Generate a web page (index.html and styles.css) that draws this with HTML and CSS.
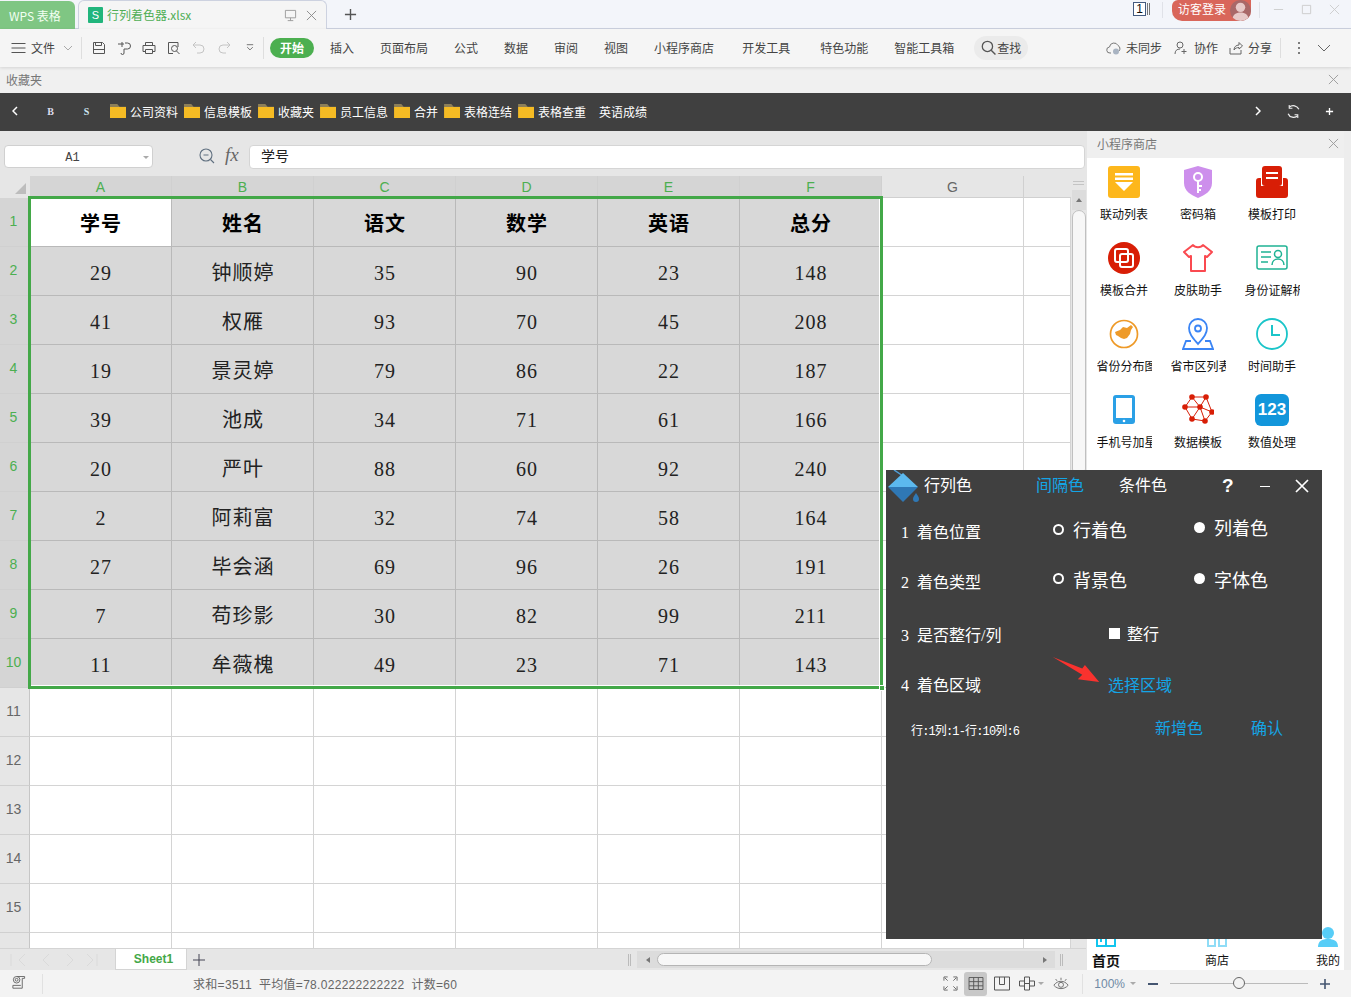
FILE: index.html
```html
<!DOCTYPE html>
<html lang="zh">
<head>
<meta charset="utf-8">
<title>行列着色器.xlsx</title>
<link rel="stylesheet" href="styles.css">
</head>
<body>
<div class="app">
  <header class="titlebar">
    <div class="tab-home">WPS 表格</div>
    <div class="tab-doc">
      <span class="xls-icon">S</span><span class="doc-name">行列着色器.xlsx</span>
      <svg class="ic-pin" viewBox="0 0 14 14"><path d="M1.500 1.500h11v8h-11zM7 9.500v3M4 12.500h6" fill="none" stroke="#999"/></svg>
      <svg class="ic-x" viewBox="0 0 12 12"><path d="M1 1l10 10M11 1L1 11" stroke="#888" fill="none"/></svg>
    </div>
    <svg class="ic-plus" viewBox="0 0 14 14"><path d="M7 1v12M1 7h12" stroke="#555" stroke-width="1.500" fill="none"/></svg>
    <div class="title-right">
      <span class="win-num">1</span><span class="win-num-tail"></span>
      <span class="title-sep"></span>
      <span class="login">访客登录<span class="avatar"><svg viewBox="0 0 20 20"><circle cx="10" cy="7" r="4.500" fill="#e7c9c8"/><path d="M2 20c0-6 4-8 8-8s8 2 8 8z" fill="#e7c9c8"/></svg></span></span>
      <span class="title-sep after-login"></span>
      <svg class="win-btn first" viewBox="0 0 12 12"><path d="M1 6h10" stroke="#ccc" fill="none"/></svg>
      <svg class="win-btn" viewBox="0 0 12 12"><path d="M1.500 1.500h9v9h-9z" stroke="#ccc" fill="none"/></svg>
      <svg class="win-btn" viewBox="0 0 12 12"><path d="M1 1l10 10M11 1L1 11" stroke="#ccc" fill="none"/></svg>
    </div>
  </header>

  <nav class="ribbon">
    <svg class="ic-menu" viewBox="0 0 14 12"><path d="M0 1.500h14M0 6h14M0 10.500h14" stroke="#555" fill="none"/></svg>
    <span class="file-label">文件</span>
    <svg class="ic-chev" viewBox="0 0 10 6"><path d="M1 1l4 4 4-4" stroke="#aaa" fill="none"/></svg>
    <span class="rb-sep"></span>
    <div class="quick">
      <svg viewBox="0 0 14 14"><path d="M1.500 1.500h9l2 2v9h-11zM3.500 1.500v3h6v-3M1.500 8.500h11" fill="none" stroke="#555"/></svg>
      <svg viewBox="0 0 14 14"><path d="M1 3h6M5 1v5M8 2h2.500a2.500 2.500 0 0 1 0 6H7v4a1.500 1.500 0 0 1-3 0" fill="none" stroke="#555"/></svg>
      <svg viewBox="0 0 14 14"><path d="M3.500 4V1.500h7V4M1 4.500h12v6h-2.500M3.500 10.500H1v-6M3.500 8.500h7v4h-7z" fill="none" stroke="#555"/></svg>
      <svg viewBox="0 0 14 14"><path d="M11 6V1.500H1.500v11H6" fill="none" stroke="#555"/><circle cx="7.500" cy="7.500" r="3" fill="none" stroke="#555"/><path d="M9.500 10l3 3" stroke="#555"/></svg>
      <svg viewBox="0 0 14 14"><path d="M4 1L1 4l3 3M1 4h7a4 4 0 0 1 0 8H5" fill="none" stroke="#c4c4c4"/></svg>
      <svg viewBox="0 0 14 14"><path d="M10 1l3 3-3 3M13 4H6a4 4 0 0 0 0 8h3" fill="none" stroke="#c4c4c4"/></svg>
      <svg class="q-small" viewBox="0 0 10 10"><path d="M1 1.500h8M1.500 4.500L5 8l3.500-3.500" fill="none" stroke="#555"/></svg>
    </div>
    <span class="rb-sep"></span>
    <span class="start-pill">开始</span>
    <span class="rb-item w-ins">插入</span>
    <span class="rb-item w-n">页面布局</span>
    <span class="rb-item w-n">公式</span>
    <span class="rb-item w-n">数据</span>
    <span class="rb-item w-n">审阅</span>
    <span class="rb-item w-n">视图</span>
    <span class="rb-item w-n">小程序商店</span>
    <span class="rb-item w-dev">开发工具</span>
    <span class="rb-item w-spec">特色功能</span>
    <span class="rb-item w-n">智能工具箱</span>
    <span class="find-pill"><svg viewBox="0 0 14 14"><circle cx="6" cy="6" r="4.800" fill="none" stroke="#555" stroke-width="1.200"/><path d="M9.500 9.500l4 4" stroke="#555" stroke-width="1.300"/></svg>查找</span>
    <div class="rb-right">
      <span class="rb-act sync"><svg viewBox="0 0 16 14"><path d="M5 12H4a3 3 0 0 1-.5-6A4.500 4.500 0 0 1 12 4.500 3.500 3.500 0 0 1 13 10" fill="none" stroke="#777"/><circle cx="10" cy="10.500" r="3" fill="#a9b4c2"/></svg>未同步</span>
      <span class="rb-act co"><svg viewBox="0 0 14 14"><circle cx="6" cy="4" r="3" fill="none" stroke="#666"/><path d="M1 13c0-3.500 2-5 5-5M10 8v5M7.500 10.500h5" fill="none" stroke="#666"/></svg>协作</span>
      <span class="rb-act share"><svg viewBox="0 0 14 14"><path d="M1 7v6h11V9M5 9c0-3 2-5 5-5V1.500L13.500 5 10 8V6.500C8 6.500 6.500 7 5 9z" fill="none" stroke="#666"/></svg>分享</span>
      <span class="rb-sep tall"></span>
      <svg class="ic-dots" viewBox="0 0 4 14"><circle cx="2" cy="2" r="1" fill="#555"/><circle cx="2" cy="7" r="1" fill="#555"/><circle cx="2" cy="12" r="1" fill="#555"/></svg>
      <svg class="ic-collapse" viewBox="0 0 14 8"><path d="M1 1l6 6 6-6" fill="none" stroke="#666"/></svg>
    </div>
  </nav>

  <div class="fav-head"><span>收藏夹</span><svg class="ic-x" viewBox="0 0 12 12"><path d="M1 1l10 10M11 1L1 11" stroke="#999" fill="none"/></svg></div>

  <div class="fav-bar">
    <svg class="fav-chev" viewBox="0 0 6 10"><path d="M5 1L1 5l4 4" stroke="#fff" stroke-width="1.500" fill="none"/></svg>
    <span class="fav-b">B</span><span class="fav-s">S</span>
    <span class="fav-item"><i class="folder"></i>公司资料</span>
    <span class="fav-item"><i class="folder"></i>信息模板</span>
    <span class="fav-item"><i class="folder"></i>收藏夹</span>
    <span class="fav-item"><i class="folder"></i>员工信息</span>
    <span class="fav-item"><i class="folder"></i>合并</span>
    <span class="fav-item"><i class="folder"></i>表格连结</span>
    <span class="fav-item"><i class="folder"></i>表格查重</span>
    <span class="fav-item plain">英语成绩</span>
    <div class="fav-right">
      <svg viewBox="0 0 6 10" class="fav-next"><path d="M1 1l4 4-4 4" stroke="#fff" stroke-width="1.500" fill="none"/></svg>
      <svg viewBox="0 0 14 14" class="fav-refresh"><path d="M3 3a5.600 5.600 0 0 1 9 2M11 11a5.600 5.600 0 0 1-9-2" stroke="#eee" stroke-width="1.200" fill="none"/><path d="M3 1v3h3M11 13v-3H8" stroke="#eee" fill="none"/></svg>
      <svg viewBox="0 0 10 10" class="fav-plus"><path d="M5 1v8M1 5h8" stroke="#fff" stroke-width="1.500" fill="none"/></svg>
    </div>
  </div>

  <main class="work">
    <section class="sheet-area">
      <div class="formula-row">
        <div class="name-box"><span>A1</span><i class="name-caret"></i></div>
        <svg class="ic-zoom" viewBox="0 0 16 16"><circle cx="7" cy="7" r="6" fill="none" stroke="#607080" stroke-width="1.100"/><path d="M4.500 7h5M11.500 11.500l3.500 3.500" stroke="#607080" stroke-width="1.100" fill="none"/></svg>
        <span class="fx">fx</span>
        <div class="formula-input">学号</div>
      </div>
      <div class="grid-wrap">
        <div class="grid">
          <div class="corner"><i></i></div>
          <div class="colh sel">A</div><div class="colh sel">B</div><div class="colh sel">C</div><div class="colh sel">D</div><div class="colh sel">E</div><div class="colh sel">F</div><div class="colh">G</div><div class="colh tail"></div>

          <div class="rowh sel">1</div><div class="cell head first">学号</div><div class="cell head">姓名</div><div class="cell head">语文</div><div class="cell head">数学</div><div class="cell head">英语</div><div class="cell head">总分</div><div class="cell e"></div><div class="cell e"></div>
          <div class="rowh sel">2</div><div class="cell">29</div><div class="cell">钟顺婷</div><div class="cell">35</div><div class="cell">90</div><div class="cell">23</div><div class="cell">148</div><div class="cell e"></div><div class="cell e"></div>
          <div class="rowh sel">3</div><div class="cell">41</div><div class="cell">权雁</div><div class="cell">93</div><div class="cell">70</div><div class="cell">45</div><div class="cell">208</div><div class="cell e"></div><div class="cell e"></div>
          <div class="rowh sel">4</div><div class="cell">19</div><div class="cell">景灵婷</div><div class="cell">79</div><div class="cell">86</div><div class="cell">22</div><div class="cell">187</div><div class="cell e"></div><div class="cell e"></div>
          <div class="rowh sel">5</div><div class="cell">39</div><div class="cell">池成</div><div class="cell">34</div><div class="cell">71</div><div class="cell">61</div><div class="cell">166</div><div class="cell e"></div><div class="cell e"></div>
          <div class="rowh sel">6</div><div class="cell">20</div><div class="cell">严叶</div><div class="cell">88</div><div class="cell">60</div><div class="cell">92</div><div class="cell">240</div><div class="cell e"></div><div class="cell e"></div>
          <div class="rowh sel">7</div><div class="cell">2</div><div class="cell">阿莉富</div><div class="cell">32</div><div class="cell">74</div><div class="cell">58</div><div class="cell">164</div><div class="cell e"></div><div class="cell e"></div>
          <div class="rowh sel">8</div><div class="cell">27</div><div class="cell">毕会涵</div><div class="cell">69</div><div class="cell">96</div><div class="cell">26</div><div class="cell">191</div><div class="cell e"></div><div class="cell e"></div>
          <div class="rowh sel">9</div><div class="cell">7</div><div class="cell">苟珍影</div><div class="cell">30</div><div class="cell">82</div><div class="cell">99</div><div class="cell">211</div><div class="cell e"></div><div class="cell e"></div>
          <div class="rowh sel">10</div><div class="cell">11</div><div class="cell">牟薇槐</div><div class="cell">49</div><div class="cell">23</div><div class="cell">71</div><div class="cell">143</div><div class="cell e"></div><div class="cell e"></div>

          <div class="rowh">11</div><div class="cell e"></div><div class="cell e"></div><div class="cell e"></div><div class="cell e"></div><div class="cell e"></div><div class="cell e"></div><div class="cell e"></div><div class="cell e"></div>
          <div class="rowh">12</div><div class="cell e"></div><div class="cell e"></div><div class="cell e"></div><div class="cell e"></div><div class="cell e"></div><div class="cell e"></div><div class="cell e"></div><div class="cell e"></div>
          <div class="rowh">13</div><div class="cell e"></div><div class="cell e"></div><div class="cell e"></div><div class="cell e"></div><div class="cell e"></div><div class="cell e"></div><div class="cell e"></div><div class="cell e"></div>
          <div class="rowh">14</div><div class="cell e"></div><div class="cell e"></div><div class="cell e"></div><div class="cell e"></div><div class="cell e"></div><div class="cell e"></div><div class="cell e"></div><div class="cell e"></div>
          <div class="rowh">15</div><div class="cell e"></div><div class="cell e"></div><div class="cell e"></div><div class="cell e"></div><div class="cell e"></div><div class="cell e"></div><div class="cell e"></div><div class="cell e"></div>
          <div class="rowh"></div><div class="cell e"></div><div class="cell e"></div><div class="cell e"></div><div class="cell e"></div><div class="cell e"></div><div class="cell e"></div><div class="cell e"></div><div class="cell e"></div>
          <div class="selection"><i class="sel-handle"></i></div>
        </div>
        <div class="vscroll"><i class="vs-top"></i><i class="vs-up"><b></b></i><i class="vs-thumb"></i></div>
      </div>
      <div class="tabbar">
        <div class="tab-nav">
          <svg viewBox="0 0 92 14"><path d="M2 1v12M16 1L10 7l6 6M40 1l-6 6 6 6M58 1l6 6-6 6M78 1l6 6-6 6M88 1v12" stroke="#dadada" fill="none"/></svg>
        </div>
        <div class="sheet-tab">Sheet1</div>
        <svg class="sheet-plus" viewBox="0 0 12 12"><path d="M6 0v12M0 6h12" stroke="#445" fill="none"/></svg>
        <div class="hscroll">
          <i class="hs-grip"></i>
          <div class="hs-track"><i class="hs-left"></i><i class="hs-thumb"></i><i class="hs-right"></i></div>
          <i class="hs-grip"></i>
        </div>
      </div>
    </section>

    <aside class="side">
      <div class="side-head"><span>小程序商店</span><svg class="ic-x" viewBox="0 0 12 12"><path d="M1 1l10 10M11 1L1 11" stroke="#999" fill="none"/></svg></div>
      <div class="apps">
        <div class="app-item"><svg viewBox="0 0 32 32"><rect width="32" height="32" rx="3" fill="#fdb71c"/><path d="M7 7h18v2.500H7zM7 11.500h18V14H7zM7 16h18l-9 9z" fill="#fff"/></svg><span>联动列表</span></div>
        <div class="app-item"><svg viewBox="0 0 32 32"><path d="M16 0l14 4v13c0 8-7 12-14 15C9 29 2 25 2 17V4z" fill="#cd8fec"/><circle cx="16" cy="11" r="4" fill="none" stroke="#fff" stroke-width="2"/><path d="M16 15v12M16 20h4M16 24h3" stroke="#fff" stroke-width="2" fill="none"/></svg><span>密码箱</span></div>
        <div class="app-item"><svg viewBox="0 0 32 32"><path d="M5 12v8h22v-8h2q3 0 3 3v14q0 3-3 3H3q-3 0-3-3V15q0-3 3-3z" fill="#d81e06"/><rect x="6" y="0" width="20" height="20" rx="3" fill="#d81e06"/><path d="M10 6h12v2H10zM10 11h12v2H10z" fill="#fff"/></svg><span>模板打印</span></div>
        <div class="app-item"><svg viewBox="0 0 32 32"><circle cx="16" cy="16" r="16" fill="#d81e06"/><rect x="7" y="7" width="13" height="13" rx="2" fill="none" stroke="#fff" stroke-width="2"/><rect x="12" y="12" width="13" height="13" rx="2" fill="none" stroke="#fff" stroke-width="2"/></svg><span>模板合并</span></div>
        <div class="app-item"><svg viewBox="0 0 32 32"><path d="M11 3c2 3 8 3 10 0l9 7-5 5-2-1v15H9V14l-2 1-5-5z" fill="none" stroke="#fa4a50" stroke-width="2" stroke-linejoin="round"/></svg><span>皮肤助手</span></div>
        <div class="app-item"><svg viewBox="0 0 32 32"><rect x="1" y="4" width="30" height="23" rx="2" fill="none" stroke="#1fb394" stroke-width="1.500"/><path d="M5 10h10M5 15h10M5 20h7" stroke="#1fb394" stroke-width="1.500"/><circle cx="22" cy="12" r="3.500" fill="none" stroke="#1fb394" stroke-width="1.500"/><path d="M16 23c0-8 12-8 12 0" fill="none" stroke="#1fb394" stroke-width="1.500"/></svg><span>身份证解析</span></div>
        <div class="app-item"><svg viewBox="0 0 32 32"><circle cx="16" cy="16" r="13.500" fill="none" stroke="#ee9a28" stroke-width="1.700"/><path d="M7 14l5-2 3-3 4 1 4-3 2 2-2 3-1 4-3 4-3 1-3-1-3-2-2-1z" fill="#ee9a28"/></svg><span>省份分布图</span></div>
        <div class="app-item"><svg viewBox="0 0 32 32"><path d="M16 26C11 20 7 16 7 10a9 9 0 0 1 18 0c0 6-4 10-9 16z" fill="none" stroke="#3b85f5" stroke-width="1.800"/><circle cx="16" cy="10.500" r="3" fill="none" stroke="#3b85f5" stroke-width="1.800"/><path d="M9 23H4l-3 8h30l-3-8h-5" fill="none" stroke="#3b85f5" stroke-width="1.800"/></svg><span>省市区列表</span></div>
        <div class="app-item"><svg viewBox="0 0 32 32"><circle cx="16" cy="16" r="15" fill="none" stroke="#1bc5c9" stroke-width="1.800"/><path d="M16 7v10h8" fill="none" stroke="#1bc5c9" stroke-width="2"/></svg><span>时间助手</span></div>
        <div class="app-item"><svg viewBox="0 0 32 32"><rect x="5" y="1" width="22" height="29" rx="3" fill="#2aa0e6"/><rect x="8" y="4" width="16" height="20" fill="#fff"/><circle cx="16" cy="27" r="1.300" fill="#fff"/></svg><span>手机号加星</span></div>
        <div class="app-item"><svg viewBox="0 0 32 32"><g fill="none" stroke="#d81e06" stroke-width="1"><path d="M10 3l14 0 6 15-7 9-13-2-7-12zM3 13l15 0 12 5M18 13l6-10M18 13l5 14M10 25l8-12M10 3l8 10"/></g><g fill="#d81e06"><circle cx="10" cy="3" r="2.800"/><circle cx="24" cy="3" r="2.800"/><circle cx="3" cy="13" r="2.800"/><circle cx="18" cy="13" r="2.800"/><circle cx="30" cy="18" r="2.800"/><circle cx="23" cy="27" r="2.800"/><circle cx="10" cy="25" r="2.800"/></g></svg><span>数据模板</span></div>
        <div class="app-item"><b class="num-ic">123</b><span>数值处理</span></div>
      </div>
      <div class="side-fill"></div>
      <div class="side-tabs">
        <div class="s-tab active"><svg viewBox="0 0 20 8"><path d="M1 0v7h18V0M10 0v7M5 0v3" fill="none" stroke="#12c5ee" stroke-width="2"/></svg>首页</div>
        <div class="s-tab"><svg viewBox="0 0 20 8"><path d="M1 0v7h7V0M12 0v7h7V0" fill="none" stroke="#8fdcf6" stroke-width="2"/></svg>商店</div>
        <div class="s-tab me"><svg viewBox="0 0 20 20"><circle cx="10" cy="6" r="6" fill="#57cdf7"/><path d="M0 20c0-6 4-8 10-8s10 2 10 8z" fill="#57cdf7"/></svg>我的</div>
      </div>
    </aside>
    <div class="edge"></div>
  </main>

  <footer class="status">
    <svg class="st-mac" viewBox="0 0 14 16"><circle cx="5" cy="4" r="3.500" fill="none" stroke="#666"/><circle cx="5" cy="4" r="1.500" fill="none" stroke="#666"/><path d="M5 .5h8.500v2H11v10.500H1v-3h8.500" fill="none" stroke="#666"/></svg>
    <span class="st-sep"></span>
    <span class="st-info one">求和=3511</span><span class="st-info">平均值=78.022222222222</span><span class="st-info">计数=60</span>
    <div class="st-right">
      <svg class="st-ic full" viewBox="0 0 16 16"><path d="M1 5V1h4M11 1h4v4M15 11v4h-4M5 15H1v-4M2 2l3 3M14 2l-3 3M14 14l-3-3M2 14l3-3" fill="none" stroke="#666"/></svg>
      <span class="st-active"><svg viewBox="0 0 16 14"><path d="M.5.500h15v13H.5zM.5 5h15M.5 9.500h15M5.500.500v13M10.500.500v13" fill="none" stroke="#555"/></svg></span>
      <svg class="st-ic page" viewBox="0 0 16 14"><path d="M.5.500h15v13H.5zM5.500.500V8h5V.5" fill="none" stroke="#555"/></svg>
      <svg class="st-ic cross" viewBox="0 0 16 14"><path d="M5.500.500h5v4h5v5h-5v4h-5v-4H.5v-5h5zM5.500 4.500v5M10.500 4.500v5M5.500 7h5" fill="none" stroke="#555"/></svg>
      <i class="st-caret"></i>
      <svg class="st-eye" viewBox="0 0 18 14"><path d="M1 9c4-6 12-6 16 0-4 5-12 5-16 0z" fill="none" stroke="#666"/><circle cx="9" cy="8.500" r="2.800" fill="none" stroke="#666"/><path d="M3 2l1.500 2M9 .5V3M15 2l-1.500 2" stroke="#666"/></svg>
      <span class="st-sep"></span>
      <span class="zoom-val">100%</span><i class="st-caret z"></i>
      <span class="zoom-minus"></span>
      <div class="zoom-track"><i class="zoom-knob"></i></div>
      <svg class="zoom-plus" viewBox="0 0 10 10"><path d="M5 0v10M0 5h10" stroke="#445570" stroke-width="1.600" fill="none"/></svg>
    </div>
  </footer>

  <div class="panel">
    <div class="p-head">
      <svg class="p-logo" viewBox="0 0 32 34"><path d="M7 0l9 6" stroke="#4f9fd8" stroke-width="1.500"/><path d="M16 3L31 17H1z" fill="#5cb9ee"/><path d="M1 17h30L16 32z" fill="#2f78b5"/><path d="M29 23c2 3 3 4 3 6a3 3 0 0 1-6 0c0-2 1-3 3-6z" fill="#2f78b5"/></svg>
      <span class="p-title">行列色</span>
      <span class="p-tab on">间隔色</span>
      <span class="p-tab off">条件色</span>
      <span class="p-q">?</span>
      <span class="p-min"></span>
      <svg class="p-close" viewBox="0 0 14 14"><path d="M1 1l12 12M13 1L1 13" stroke="#fff" stroke-width="1.700" fill="none"/></svg>
    </div>
    <div class="p-row r1">
      <span class="p-label">1 着色位置</span>
      <span class="opt a"><i class="dot ring"></i>行着色</span>
      <span class="opt b"><i class="dot"></i>列着色</span>
    </div>
    <div class="p-row r2">
      <span class="p-label">2 着色类型</span>
      <span class="opt a"><i class="dot ring"></i>背景色</span>
      <span class="opt b"><i class="dot"></i>字体色</span>
    </div>
    <div class="p-row r3">
      <span class="p-label">3 是否整行/列</span>
      <span class="opt whole"><i class="square"></i>整行</span>
    </div>
    <div class="p-row r4">
      <span class="p-label">4 着色区域</span>
      <span class="p-link">选择区域</span>
      <svg class="p-arrow" viewBox="0 0 52 28"><path d="M0 0L33 13l3-4 16 19-24-3 5-5z" fill="#f9322e"/></svg>
    </div>
    <div class="p-row r5">
      <span class="p-range">行:1列:1-行:10列:6</span>
      <span class="p-link add">新增色</span>
      <span class="p-link ok">确认</span>
    </div>
  </div>
</div>
</body>
</html>
```

FILE: styles.css
```css
* { box-sizing: border-box; }
html, body { margin: 0; padding: 0; height: 100%; overflow: hidden; }
body { font-family: "Noto Sans CJK SC", "Noto Sans", sans-serif; background: #f3f3f3; color: #333; }
i { display: block; font-style: normal; }
svg { display: block; flex: none; }

.app { position: relative; width: 1351px; height: 997px; display: flex; flex-direction: column; overflow: hidden; }

/* title bar */
.titlebar { height: 29px; flex: none; display: flex; align-items: flex-end; background: #f3f5fa; border-bottom: 1px solid #cdd2e0; }
.tab-home { width: 75px; height: 28px; flex: none; background: #7fc683; color: #f2fff2; font-size: 12px; line-height: 30px; padding-left: 9px; border-radius: 0 6px 0 0; margin-bottom: -1px; white-space: nowrap; }
.tab-doc { width: 249px; height: 29px; flex: none; margin-left: 3px; margin-bottom: -1px; background: #f5f5f5; border: 1px solid #cdd2e0; border-bottom: 0; border-radius: 6px 6px 0 0; display: flex; align-items: center; padding-left: 9px; }
.xls-icon { width: 15px; height: 16px; flex: none; background: #21b57c; color: #fff; font-size: 11px; line-height: 16px; text-align: center; border-radius: 1px; font-family: "Liberation Sans", sans-serif; }
.doc-name { margin-left: 4px; font-size: 12px; color: #4fae55; width: 177px; flex: none; white-space: nowrap; padding-bottom: 1px; }
.ic-pin { width: 13px; height: 13px; }
.ic-x { width: 11px; height: 11px; }
.tab-doc .ic-x { margin-left: 9px; }
.ic-plus { width: 13px; height: 13px; margin: 0 0 7px 17px; }
.title-right { margin-left: auto; display: flex; align-items: flex-start; height: 28px; padding-right: 11px; }
.win-num { width: 13px; height: 14px; border: 1px solid #445b80; font: 12px/12px "Liberation Sans", sans-serif; color: #111; text-align: center; background: #fff; margin-top: 2px; }
.win-num-tail { width: 3px; height: 12px; border-left: 1px solid #777; border-right: 1px solid #777; margin: 3px 0 0 1px; }
.title-sep { width: 1px; height: 16px; background: #e0e2e8; margin: 2px 0 0 12px; }
.title-sep.after-login { margin-left: 8px; }
.login { width: 79px; height: 21px; background: #d9665a; color: #fff; border-radius: 0 0 10px 10px / 0 0 10px 10px; border-top-left-radius: 6px; font-size: 12px; line-height: 17px; padding-left: 6px; margin: 0 0 0 9px; white-space: nowrap; display: flex; justify-content: space-between; }
.avatar { width: 21px; height: 21px; background: #a96868; border-radius: 50%; overflow: hidden; }
.avatar svg { width: 21px; height: 21px; }
.win-btn { width: 11px; height: 11px; margin: 4px 0 0 17px; }
.win-btn.first { margin-left: 13px; }

/* ribbon */
.ribbon { height: 38px; flex: none; display: flex; align-items: center; background: #f5f5f5; box-shadow: 0 1px 3px rgba(0,0,0,.12); position: relative; z-index: 1; font-size: 12px; color: #444; white-space: nowrap; padding: 0 19px 1px 0; }
.ic-menu { width: 15px; height: 12px; margin-left: 11px; }
.file-label { margin-left: 5px; }
.ic-chev { width: 10px; height: 6px; margin-left: 8px; }
.rb-sep { width: 1px; height: 22px; flex: none; background: #dedede; margin-left: 8px; }
.rb-sep.tall { height: 20px; }
.quick { display: flex; align-items: center; gap: 11px; margin-left: 10px; }
.quick svg { width: 14px; height: 14px; }
.quick .q-small { width: 8px; height: 9px; margin: 0 1px 0 4px; }
.start-pill { width: 44px; height: 20px; flex: none; border-radius: 10px; background: #4caf50; color: #fff; text-align: center; line-height: 19px; font-size: 12px; font-weight: 700; margin-left: 6px; }
.rb-item { flex: none; }
.w-ins { margin-left: 16px; }
.w-n { margin-left: 26px; }
.w-dev { margin-left: 28px; }
.w-spec { margin-left: 30px; }
.find-pill { margin-left: 20px; width: 54px; height: 24px; flex: none; background: #ebebeb; border-radius: 12px; display: flex; align-items: center; padding-left: 7px; gap: 1px; }
.find-pill svg { width: 15px; height: 15px; }
.rb-right { margin-left: auto; display: flex; align-items: center; }
.rb-act { display: flex; align-items: center; }
.rb-act svg { width: 14px; height: 14px; }
.sync { gap: 4px; }
.sync svg { width: 16px; }
.co { gap: 6px; margin-left: 12px; }
.share { gap: 5px; margin-left: 11px; }
.ic-dots { width: 4px; height: 14px; margin-left: 16px; }
.ic-collapse { width: 16px; height: 8px; margin: 0 0 0 15px; }

/* favourites */
.fav-head { height: 26px; flex: none; background: #f0f0f0; display: flex; justify-content: space-between; align-items: center; padding: 0 12px 2px 6px; font-size: 12px; color: #777; }
.fav-bar { height: 38px; flex: none; background: #404040; color: #fff; display: flex; align-items: center; font-size: 12px; white-space: nowrap; padding-bottom: 2px; }
.fav-chev { width: 6px; height: 10px; margin-left: 12px; }
.fav-b, .fav-s { font: bold 10px "Liberation Serif", serif; width: 7px; text-align: center; flex: none; }
.fav-b { margin-left: 29px; color: #dde; }
.fav-s { margin-left: 29px; color: #cfe6f2; }
.fav-item { display: flex; align-items: center; margin-left: 6px; }
.fav-s + .fav-item { margin-left: 20px; }
.fav-item.plain { margin-left: 13px; }
.folder { width: 16px; height: 14px; flex: none; background: linear-gradient(#8d7f58 0 3px, #f5bb24 3px); margin-right: 4px; clip-path: polygon(0 0, 45% 0, 60% 20%, 100% 20%, 100% 100%, 0 100%); }
.fav-right { margin-left: auto; display: flex; align-items: center; }
.fav-next { width: 6px; height: 10px; margin-right: -1px; }
.fav-refresh { width: 15px; height: 15px; margin-left: 26px; }
.fav-plus { width: 9px; height: 9px; margin: 0 17px 0 24px; }

/* work area */
.work { flex: 1; min-height: 0; display: flex; background: #e6e6e6; }
.sheet-area { width: 1086px; flex: none; display: flex; flex-direction: column; min-height: 0; }
.formula-row { height: 45px; flex: none; display: flex; align-items: flex-start; padding: 14px 0 0 4px; background: #e6e6e6; }
.name-box { width: 149px; height: 23px; background: #fff; border: 1px solid #d0d0d0; border-radius: 4px; position: relative; text-align: center; font: 12px/24px "Liberation Mono", monospace; color: #444; padding-right: 12px; }
.name-caret { position: absolute; right: 3px; top: 10px; border: 3px solid transparent; border-top: 3px solid #aaa; }
.ic-zoom { width: 16px; height: 16px; margin: 3px 0 0 46px; }
.fx { font: italic 19px/20px "Liberation Serif", serif; color: #666; margin-left: 10px; width: 23px; }
.formula-input { width: 836px; height: 24px; margin-left: 1px; background: #fff; border: 1px solid #d5d5d5; border-radius: 4px; font-size: 14px; line-height: 19px; color: #222; padding-left: 11px; }

.grid-wrap { flex: 1; min-height: 0; display: flex; position: relative; overflow: hidden; }
.grid { position: relative; flex: 1; display: grid; grid-template-columns: 30px repeat(6, 142px) 142px 47px; grid-template-rows: 22px repeat(16, 49px); align-content: start; background: #fff; }
.corner { background: #e6e6e6; position: relative; }
.corner i { position: absolute; right: 4px; bottom: 4px; width: 0; height: 0; border-left: 11px solid transparent; border-bottom: 11px solid #bdbdbd; }
.colh { background: #e6e6e6; border-right: 1px solid #d0d0d0; border-bottom: 1px solid #d0d0d0; font: 14px/22px "Liberation Sans", sans-serif; color: #666; text-align: center; }
.colh.sel { background: #d5d5d5; color: #4caf50; }
.colh.tail { border-right: 0; }
.rowh { background: #e6e6e6; border-bottom: 1px solid #d0d0d0; border-right: 1px solid #c6c6c6; font: 14px/47px "Liberation Sans", sans-serif; color: #666; text-align: center; padding-right: 2px; }
.rowh.sel { background: #d5d5d5; color: #4caf50; }
.cell { background: #d8d8d8; border-right: 1px solid #b9b9b9; border-bottom: 1px solid #b9b9b9; text-align: center; font-family: "Liberation Serif", "Noto Sans CJK SC", serif; font-size: 20px; letter-spacing: 1px; line-height: 52px; padding-left: 1px; color: #222; overflow: hidden; }
.cell.e { background: #fff; border-right: 1px solid #d4d4d4; border-bottom: 1px solid #d4d4d4; }
.cell.head { font-weight: 700; color: #000; }
.cell.head.first { background: #fff; }
.selection { position: absolute; left: 28px; top: 20px; width: 855px; height: 493px; border: 3px solid #43a848; box-shadow: inset -1px -1px 0 #fff; pointer-events: none; }
.sel-handle { position: absolute; right: -5px; bottom: -5px; width: 6px; height: 6px; background: #43a848; border: 1px solid #fff; }
.vscroll { width: 15px; background: #e6e6e6; position: absolute; right: 0; top: 0; bottom: 0; }
.vs-top { height: 4px; margin: 5px 2px 0; border-top: 1px solid #c4c4c4; border-bottom: 1px solid #c4c4c4; }
.vs-up { height: 20px; margin: 5px 0 0 1px; background: #dcdcdc; display: flex; align-items: center; justify-content: center; }
.vs-up b { border: 3px solid transparent; border-bottom: 4px solid #777; margin-top: -4px; }
.vs-thumb { width: 14px; height: 266px; background: #f7f7f7; border: 1px solid #c0c0c0; border-radius: 7px; margin-left: 1px; }

.tabbar { height: 22px; flex: none; display: flex; align-items: stretch; background: #e6e6e6; border-top: 1px solid #d4d4d4; position: relative; }
.tab-nav { width: 115px; display: flex; align-items: center; padding-left: 9px; }
.tab-nav svg { width: 92px; height: 14px; }
.sheet-tab { width: 72px; height: 21px; background: #fff; border: 1px solid #d4d4d4; border-top: 0; color: #43a848; font: bold 12px/21px "Liberation Sans", sans-serif; text-align: center; padding-left: 5px; }
.sheet-plus { width: 12px; height: 12px; margin: 5px 0 0 6px; }
.hscroll { margin-left: auto; display: flex; align-items: center; padding-right: 23px; }
.hs-grip { width: 3px; height: 12px; border-left: 1px solid #bbb; border-right: 1px solid #bbb; }
.hs-track { width: 418px; height: 17px; margin: 0 5px 0 6px; background: #dcdcdc; position: relative; display: flex; align-items: center; }
.hs-left { margin-left: 6px; border: 3px solid transparent; border-right: 4px solid #777; }
.hs-thumb { width: 275px; height: 13px; background: #f7f7f7; border: 1px solid #b5b5b5; border-radius: 7px; margin-left: 7px; }
.hs-right { position: absolute; right: 5px; border: 3px solid transparent; border-left: 4px solid #777; }

/* side panel */
.side { width: 257px; flex: none; margin-left: 1px; background: #fff; display: flex; flex-direction: column; }
.side-head { height: 27px; flex: none; background: #efefef; display: flex; align-items: center; justify-content: space-between; padding: 0 5px 2px 10px; font-size: 12px; color: #777; }
.apps { display: grid; grid-template-columns: repeat(3, 74px); grid-auto-rows: 76px; padding-top: 8px; }
.app-item { display: flex; flex-direction: column; align-items: center; font-size: 12px; color: #111; overflow: hidden; white-space: nowrap; }
.app-item svg { width: 32px; height: 32px; }
.app-item span { display: block; width: 55px; text-align: center; overflow: hidden; margin-top: 7px; line-height: 18px; height: 18px; }
.num-ic { display: block; width: 34px; height: 32px; flex: none; background: #1296db; border-radius: 6px; color: #fff; font: bold 17px/32px "Liberation Sans", sans-serif; text-align: center; }
.side-fill { flex: 1; }
.side-tabs { flex: none; display: flex; justify-content: space-between; align-items: flex-end; background: #fff; padding: 0 2px 1px 5px; }
.s-tab { width: 28px; display: flex; flex-direction: column; align-items: center; font-size: 12px; color: #111; line-height: 18px; white-space: nowrap; }
.s-tab svg { width: 20px; height: 8px; margin-bottom: 4px; }
.s-tab.active { font-size: 14px; font-weight: 700; }
.s-tab.me svg { height: 20px; }
.edge { flex: 1; background: #ededed; }

/* status bar */
.status { height: 27px; flex: none; display: flex; align-items: center; background: #f3f3f3; font: 12px "Liberation Sans", "Noto Sans CJK SC", sans-serif; color: #666; white-space: nowrap; }
.st-mac { width: 15px; height: 15px; margin-left: 11px; }
.st-sep { width: 1px; height: 20px; flex: none; background: #e1e1e1; margin-left: 16px; }
.st-info { margin-left: 7px; letter-spacing: .3px; }
.st-info.one { margin-left: 150px; }
.st-right { margin-left: auto; display: flex; align-items: center; padding-right: 21px; }
.st-ic { width: 16px; height: 15px; }
.st-ic.full { width: 15px; }
.st-active { width: 23px; height: 24px; background: #c8c8c8; border-radius: 3px; display: flex; align-items: center; justify-content: center; margin-left: 6px; }
.st-active svg { width: 16px; height: 13px; }
.st-ic.page { margin-left: 7px; }
.st-ic.cross { margin-left: 9px; }
.st-caret { border: 3px solid transparent; border-top: 3px solid #aaa; margin: 3px 0 0 3px; }
.st-caret.z { margin-left: 5px; }
.st-eye { width: 16px; height: 15px; margin-left: 9px; }
.st-right .st-sep { margin-left: 13px; }
.zoom-val { margin-left: 11px; color: #6f8aa5; }
.zoom-minus { width: 10px; height: 2px; background: #445570; margin-left: 12px; }
.zoom-track { width: 138px; height: 1px; background: #bbb; position: relative; margin-left: 12px; }
.zoom-knob { position: absolute; left: 63px; top: -6px; width: 12px; height: 12px; background: #f3f3f3; border: 1px solid #666; border-radius: 50%; }
.zoom-plus { width: 10px; height: 10px; margin-left: 12px; }

/* floating tool window */
.panel { position: absolute; left: 886px; top: 470px; width: 436px; height: 469px; background: #404040; color: #fff; font-family: "Liberation Serif", "Noto Sans CJK SC", sans-serif; font-size: 16px; word-spacing: 4px; display: flex; flex-direction: column; z-index: 5; }
.p-head { display: flex; align-items: center; height: 32px; position: relative; flex: none; }
.p-logo { width: 32px; height: 34px; margin: 2px 0 0 1px; }
.p-title { margin: 0 0 5px 5px; width: 112px; }
.p-tab { width: 83px; margin-bottom: 5px; }
.p-tab.on { color: #14a5e6; }
.p-q { font: bold 19px "Liberation Sans", sans-serif; margin-left: 20px; width: 10px; }
.p-min { width: 10px; height: 1px; background: #fff; margin-left: 28px; }
.p-close { width: 14px; height: 14px; margin-left: 25px; }
.p-row { position: relative; display: grid; grid-template-columns: 147px 141px 1fr; align-items: center; }
.p-label { padding-left: 15px; white-space: nowrap; }
.opt { display: flex; align-items: center; font-size: 18px; white-space: nowrap; }
.dot { width: 11px; height: 11px; background: #fff; border-radius: 50%; margin-right: 9px; flex: none; }
.dot.ring { background: transparent; border: 2px solid #fff; }
.square { width: 11px; height: 11px; background: #fff; margin-right: 7px; }
.r1 { height: 34px; margin-top: 12px; }
.r1 .opt.a, .r2 .opt.a { margin-left: 20px; }
.r1 .opt.a { margin-top: -4px; }
.r1 .opt.b { margin-top: -8px; margin-left: 20px; }
.r2 { height: 34px; margin-top: 16px; }
.r2 .opt.a { margin-top: -5px; }
.r2 .opt.b { margin-top: -5px; margin-left: 20px; }
.r3 { height: 34px; margin-top: 19px; }
.r3 .opt.whole { grid-column: 2 / 4; margin-left: 76px; margin-top: -2px; font-size: 16px; }
.r4 { height: 34px; margin-top: 16px; }
.p-link { color: #14a5e6; }
.r4 .p-link { margin-left: 75px; grid-column: 2 / 4; }
.p-arrow { position: absolute; left: 165px; top: -10px; width: 50px; height: 25px; }
.r5 { height: 30px; margin-top: 14px; grid-template-columns: 269px 96px 1fr; }
.r5 .p-link { margin-top: -6px; }
.p-range { font: 12px "Liberation Mono", "Noto Sans CJK SC", monospace; letter-spacing: -.85px; padding-left: 25px; white-space: nowrap; }
```
